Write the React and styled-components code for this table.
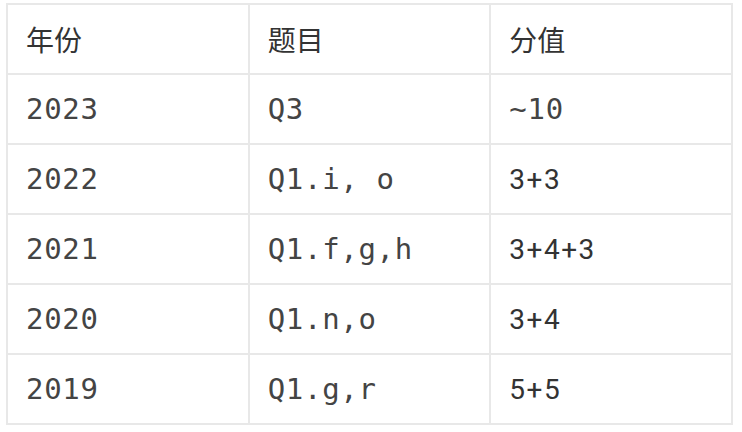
import styled, { createGlobalStyle } from "styled-components";

const GlobalStyle = createGlobalStyle`
  body {
    margin: 0;
    background: #ffffff;
  }
`;

// score column: only "~10" is set as code, the rest is plain text
const rows = [
  { year: "2023", question: "Q3", score: "~10", code: true },
  { year: "2022", question: "Q1.i, o", score: "3+3" },
  { year: "2021", question: "Q1.f,g,h", score: "3+4+3" },
  { year: "2020", question: "Q1.n,o", score: "3+4" },
  { year: "2019", question: "Q1.g,r", score: "5+5" },
];

const App = () => {
  return (
    <>
      <GlobalStyle />
      <Page>
        <Table>
          <thead>
            <tr>
              <Head>年份</Head>
              <Head>题目</Head>
              <Head>分值</Head>
            </tr>
          </thead>
          <tbody>
            {rows.map((r) => (
              <tr key={r.year}>
                <Cell>{r.year}</Cell>
                <Cell>{r.question}</Cell>
                <Cell $plain={!r.code}>{r.score}</Cell>
              </tr>
            ))}
          </tbody>
        </Table>
      </Page>
    </>
  );
};

const Page = styled.div`
  padding: 3px 0 0 6px;
`;

const Table = styled.table`
  border-collapse: collapse;
  width: 727px;
  table-layout: fixed;
  color: #3a3a3a;
`;

const Head = styled.th`
  height: 68px;
  padding: 0 18px;
  border: 2px solid #e8e8e8;
  text-align: left;
  font-weight: 400;
  font-size: 28px;
  font-family: "Noto Sans CJK SC", "Noto Sans", sans-serif;
  color: #333333;
`;

const Cell = styled.td`
  height: 68px;
  padding: 0 18px;
  border: 2px solid #e8e8e8;
  font-size: ${(p) => (p.$plain ? "28px" : "29px")};
  letter-spacing: ${(p) => (p.$plain ? "1.5px" : "0.7px")};
  font-family: ${(p) =>
    p.$plain ? "Roboto, 'Noto Sans', sans-serif" : "'DejaVu Sans Mono', monospace"};
  color: ${(p) => (p.$plain ? "#333333" : "#444444")};
  white-space: pre;
`;

export default App;
